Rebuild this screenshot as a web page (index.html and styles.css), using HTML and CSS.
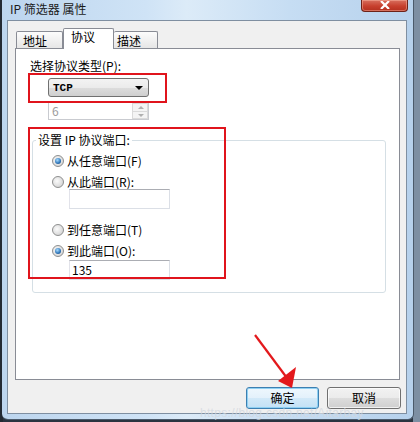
FILE: index.html
```html
<!DOCTYPE html>
<html lang="zh">
<head>
<meta charset="utf-8">
<title>IP 筛选器 属性</title>
<link rel="stylesheet" href="styles.css">
</head>
<body>
<div class="screen">
  <div class="window">
    <div class="titlebar">
      <span class="title">IP 筛选器 属性</span>
      <div class="close"><svg width="12" height="8" viewBox="0 0 12 8"><path d="M2 0 L10 8 M10 0 L2 8" stroke="#fff" stroke-width="2.2"/></svg></div>
    </div>
    <div class="client">
      <div class="tabs">
        <div class="tab t1">地址</div>
        <div class="tab t2 active">协议</div>
        <div class="tab t3">描述</div>
      </div>
      <div class="panel">
        <div class="lbl">选择协议类型(P):</div>
        <div class="select"><span>TCP</span><span class="caret"></span></div>
        <div class="spin"><span class="spin-val">6</span>
          <div class="spin-btns"><div class="sb up"></div><div class="sb down"></div></div>
        </div>
        <div class="group">
          <div class="legend">设置 IP 协议端口:</div>
          <div class="opt r1"><span class="radio checked"></span><span>从任意端口(F)</span></div>
          <div class="opt r2"><span class="radio"></span><span>从此端口(R):</span></div>
          <div class="field f1"></div>
          <div class="opt r3"><span class="radio"></span><span>到任意端口(T)</span></div>
          <div class="opt r4"><span class="radio checked"></span><span>到此端口(O):</span></div>
          <div class="field f2">135</div>
        </div>
      </div>
      <div class="actions">
        <div class="btn default">确定</div>
        <div class="btn">取消</div>
      </div>
    </div>
  </div>

  <div class="mark box1"></div>
  <div class="mark box2"></div>
  <svg class="arrow" width="420" height="422" viewBox="0 0 420 422">
    <path d="M255 335 L287 378" stroke="#e3191c" stroke-width="2.2" fill="none"/>
    <polygon points="278,381 296,367 292,388" fill="#e3191c"/>
  </svg>
  <div class="watermark">https://blog.csdn.net/Aitarbay</div>
</div>
</body>
</html>
```
FILE: styles.css
```css
html, body { margin: 0; padding: 0; }
body {
  width: 420px; height: 422px; overflow: hidden;
  background: #2a3440;
  font-family: "Noto Sans CJK SC", "Noto Sans", sans-serif;
  font-size: 12px; color: #000;
}
.screen {
  position: relative; width: 420px; height: 422px;
  display: flex;
  background: linear-gradient(to right, #232a33 0 3px, transparent 3px),
              linear-gradient(to right, transparent 413px, #7d8fa3 413px);
}
.window {
  margin-left: 2px; width: 412px; height: 420px; box-sizing: border-box;
  padding: 0 6px 5px 5px;
  border-right: 1px solid #4b5a6b; border-bottom: 1px solid #4b5a6b;
  border-radius: 0 0 6px 6px;
  background: linear-gradient(to right, #bcd5ee 0%, #cfe3f6 35%, #dcebf8 45%, #c6ddf3 70%, #b6d1ec 100%);
  display: flex; flex-direction: column;
}
.titlebar {
  height: 20px; flex: none; display: flex; align-items: flex-start;
  justify-content: space-between;
}
.title {
  margin: 2px 0 0 3px; line-height: 14px; color: #1b1b1b;
}
.close {
  width: 47px; height: 12px; box-sizing: border-box; margin-right: -1px;
  background: linear-gradient(#d8705f 0%, #c7402e 55%, #b3301f 100%);
  border: 1px solid #6e2218; border-top: none;
  border-radius: 0 0 4px 4px;
  display: flex; justify-content: center; align-items: flex-start;
  box-shadow: inset 0 0 0 1px rgba(255,190,170,0.45);
}
.close svg { margin-top: 1px; }
.client {
  flex: 1; background: #f0f0f0; border: 1px solid #7f8fa1;
  padding: 7px 6px 0 7px; display: flex; flex-direction: column;
}
.tabs {
  height: 20px; display: flex; align-items: flex-end; padding-left: 1px;
}
.tab {
  box-sizing: border-box; height: 17px; line-height: 14px;
  border: 1px solid #898c95; border-bottom: none;
  border-radius: 2px 2px 0 0;
  background: linear-gradient(#fcfcfc, #e6e6e6);
  padding-top: 2px; color: #000;
}
.t1 { width: 47px; padding-left: 6px; }
.t3 { width: 44px; padding-left: 3px; border-left: none; }
.tab.active {
  height: 21px; width: 51px; padding-left: 7px; padding-top: 1px;
  background: #fff; margin-bottom: -1px; position: relative; z-index: 1;
}
.panel {
  box-sizing: border-box; height: 332px;
  border: 1px solid #898c95; background: #fff;
  padding: 10px 0 0 14px;
}
.lbl { line-height: 14px; }
.select {
  box-sizing: border-box; width: 101px; height: 19px; margin: 5px 0 0 18px;
  border: 1px solid #707070; border-radius: 3px;
  background: linear-gradient(#f3f3f3 0%, #ebebeb 50%, #dddddd 51%, #cfcfcf 100%);
  display: flex; align-items: center; justify-content: space-between;
  padding: 0 5px 0 4px; line-height: 14px; font-weight: bold;
  font-family: "Liberation Mono", "Noto Sans CJK SC", monospace; font-size: 11px;
}
.caret {
  width: 0; height: 0; border-left: 4px solid transparent; border-right: 4px solid transparent;
  border-top: 4px solid #000;
}
.spin {
  box-sizing: border-box; width: 101px; height: 18px; margin: 5px 0 0 18px;
  border: 1px solid #c9cbd0; background: #fff;
  display: flex; justify-content: space-between; align-items: stretch;
}
.spin-val { color: #9c9c9c; line-height: 15px; padding-left: 3px; }
.spin-btns { width: 16px; display: flex; flex-direction: column; }
.sb {
  flex: 1; border: 1px solid #dadada; background: #f4f4f4; position: relative;
}
.sb + .sb { border-top: none; }
.sb::after {
  content: ""; position: absolute; left: 5px; top: 2px;
  border-left: 3px solid transparent; border-right: 3px solid transparent;
}
.up::after { border-bottom: 3px solid #b0b0b0; }
.down::after { border-top: 3px solid #b0b0b0; }
.group {
  box-sizing: border-box; width: 354px; margin: 20px 0 0 2px;
  border: 1px solid #d5dfe5; border-radius: 3px;
  padding: 0 0 12px 19px;
}
.legend {
  display: table; background: #fff; line-height: 14px;
  margin: -8px 0 0 -16px; padding: 0 2px;
}
.opt { display: flex; align-items: center; height: 14px; line-height: 14px; margin-top: 7px; }
.opt.r3 { margin-top: 14px; }
.radio {
  width: 12px; height: 12px; box-sizing: border-box; border-radius: 50%;
  border: 1px solid #8e8f8f; margin-right: 3px; position: relative;
  background: radial-gradient(circle at 40% 40%, #fbfbfb, #d9d9d9 70%, #cfcfcf);
}
.radio.checked::after {
  content: ""; position: absolute; left: 2px; top: 2px; width: 6px; height: 6px;
  border-radius: 50%;
  background: radial-gradient(circle at 40% 35%, #a8dcff, #2d74b8 60%, #163e6c);
}
.field {
  box-sizing: border-box; width: 101px; height: 20px; margin-left: 17px;
  border: 1px solid #dbdfe6; border-top-color: #abadb3; border-left-color: #e2e3ea;
  background: #fff; line-height: 17px; padding-left: 2px;
}
.f2 { margin-top: 2px; }
.actions {
  display: flex; justify-content: flex-end; gap: 8px;
  margin: 7px -1px 0 0;
}
.btn {
  box-sizing: border-box; width: 74px; height: 22px; line-height: 19px; text-align: center;
  border: 1px solid #707070; border-radius: 3px;
  background: linear-gradient(#f2f2f2 0%, #ebebeb 50%, #dddddd 51%, #cfcfcf 100%);
  box-shadow: inset 0 0 0 1px rgba(255,255,255,0.7);
}
.btn.default {
  width: 73px; border-color: #3c7fb1;
  box-shadow: inset 0 0 0 1px #8fd0f2;
  background: linear-gradient(#eef7fd 0%, #e3f1fb 50%, #d2e9f8 51%, #c3e1f5 100%);
}
.mark { position: absolute; border: 2px solid #e0141c; box-sizing: border-box; }
.box1 { left: 28px; top: 73px; width: 139px; height: 30px; }
.box2 { left: 28px; top: 127px; width: 198px; height: 152px; }
.arrow { position: absolute; left: 0; top: 0; }
.watermark {
  position: absolute; left: 200px; top: 407px; font-size: 12px; line-height: 12px;
  font-family: "Liberation Sans", sans-serif; color: rgba(210,215,222,0.75);
  letter-spacing: 0.3px;
}
```
